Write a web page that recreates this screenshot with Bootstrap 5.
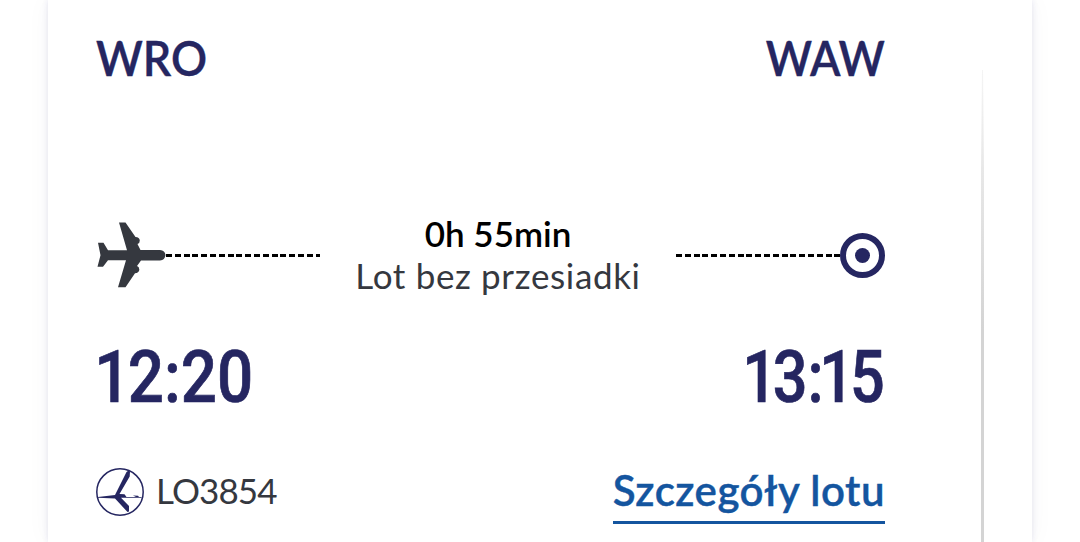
<!DOCTYPE html>
<html lang="pl">
<head>
    <meta charset="UTF-8">
    <meta name="viewport" content="width=device-width, initial-scale=1.0">
    <title>Lot WRO - WAW</title>
    <link href="https://cdn.jsdelivr.net/npm/bootstrap@5.3.0/dist/css/bootstrap.min.css" rel="stylesheet">
    <style>
        body {
            background-color: #fff;
            font-family: 'Lato', sans-serif;
            color: #35383f;
            overflow: hidden;
        }

        .flight-card {
            width: 984px;
            height: 542px;
            padding: 0 48px;
            background-color: #fff;
            box-shadow: 0 0 6px rgba(38, 38, 120, 0.12), 0 0 24px rgba(38, 38, 100, 0.04);
        }

        .flight-info {
            width: 789px;
        }

        .airports {
            height: 114px;
            font-size: 48px;
            font-weight: 600;
            line-height: 116px;
            color: #252661;
            -webkit-text-stroke: 0.4px #252661;
        }

        .from {
            transform: scaleX(0.935);
            transform-origin: left;
        }

        .to {
            transform: scaleX(0.925);
            transform-origin: right;
        }

        .route {
            height: 92px;
            margin-top: 95px;
        }

        .plane {
            width: 71px;
            height: 68px;
            margin-left: 1px;
            margin-right: -2px;
        }

        .dashes {
            height: 3px;
            background: repeating-linear-gradient(90deg, #000 0 6px, transparent 6px 8.8px);
        }

        .dash-left {
            width: 154px;
        }

        .dash-right {
            width: 164px;
        }

        .duration {
            font-size: 35px;
            font-weight: 600;
            line-height: 42px;
            margin-top: -2px;
            color: #000;
        }

        .stops {
            font-size: 35px;
            line-height: 42px;
            letter-spacing: 0.65px;
        }

        .times {
            height: 90px;
            margin-top: 32px;
            font-family: 'Roboto', sans-serif;
            font-size: 72px;
            font-weight: 500;
            line-height: 90px;
            color: #252661;
            -webkit-text-stroke: 0.7px #252661;
        }

        /* condensed digits */
        .departure {
            transform: scaleX(0.885);
            transform-origin: left;
        }

        .arrival {
            transform: scaleX(0.85);
            transform-origin: right;
        }

        .departure .one {
            margin-left: -2px;
            margin-right: -3px;
        }

        .arrival .one {
            margin-right: -5px;
        }

        .arrival .one + .one {
            margin-left: -5px;
            margin-right: -5px;
        }

        .bottom-line {
            height: 60px;
            margin-top: 41px;
        }

        .airline-logo {
            margin-top: 4px;
        }

        .flight-number {
            margin-left: 12px;
            margin-top: 2px;
            font-size: 35px;
            line-height: 48px;
            letter-spacing: -0.9px;
        }

        .details-link {
            height: 60px;
            font-size: 42px;
            font-weight: 600;
            line-height: 53px;
            letter-spacing: 0.5px;
            color: #14559f;
            border-bottom: 3px solid #14559f;
            -webkit-text-stroke: 0.4px #14559f;
        }

        .divider {
            width: 3px;
            height: 472px;
            margin-top: 70px;
            margin-left: 96px;
            background: linear-gradient(#f4f4f4, #d4d4d4 260px, #d4d4d4);
            clip-path: polygon(1px 0, 2px 0, 3px 100px, 3px 100%, 0 100%, 0 100px);
        }
    </style>
</head>
<body>
<div class="flight-card mx-auto d-flex">
    <div class="flight-info">
        <div class="airports d-flex justify-content-between">
            <span class="from">WRO</span>
            <span class="to">WAW</span>
        </div>
        <div class="route d-flex align-items-center">
            <svg class="plane flex-shrink-0" viewBox="0 0 71 68" fill="#35383f">
                <path d="M22 1.500h6.500l10 14.500q4 0 4.300 3.500 0 3-2.300 3.500l3 6h19.500q5 .5 5.500 5-.5 5-5.500 5.500h-19l-4 5.500q2.500 1 2.300 4-.5 3-4.300 3.200l-9.500 14h-7.500l8-27h-18l-5 6.500h-5.500l3-11.500-2.500-12.500h5.500l4.500 7.500h19z"/>
            </svg>
            <div class="dashes dash-left"></div>
            <div class="text-center flex-grow-1">
                <div class="duration">0h 55min</div>
                <div class="stops">Lot bez przesiadki</div>
            </div>
            <div class="dashes dash-right"></div>
            <svg class="flex-shrink-0" width="45" height="45" viewBox="0 0 45 45">
                <circle cx="22.500" cy="22.500" r="19.500" fill="#fff" stroke="#252661" stroke-width="6"/>
                <circle cx="22.500" cy="22.500" r="7.500" fill="#252661"/>
            </svg>
        </div>
        <div class="times d-flex justify-content-between">
            <div class="departure"><span class="one">1</span>2:20</div>
            <div class="arrival"><span class="one">1</span>3:<span class="one">1</span>5</div>
        </div>
        <div class="bottom-line d-flex justify-content-between">
            <div class="d-flex">
                <svg class="airline-logo" width="48" height="48" viewBox="0 0 48 48" fill="#252661">
                    <circle cx="24" cy="24" r="23.200" fill="none" stroke="#252661" stroke-width="1.500"/>
                    <path d="M2 29l17-2L30.500 4l2-1.500 1.500 1-.3 5L23.500 26l5 .3 2 2.700h15v.8H25l8 8.200v5.500l-1.500.5L19 30.500 2 29.700z"/>
                    <path d="M37 27.500l5 .3 1 1.200h-3z"/>
                </svg>
                <span class="flight-number">LO3854</span>
            </div>
            <a href="#" class="details-link text-decoration-none">Szczegóły lotu</a>
        </div>
    </div>
    <div class="divider"></div>
</div>
<script src="https://cdn.jsdelivr.net/npm/bootstrap@5.3.0/dist/js/bootstrap.bundle.min.js"></script>
</body>
</html>
